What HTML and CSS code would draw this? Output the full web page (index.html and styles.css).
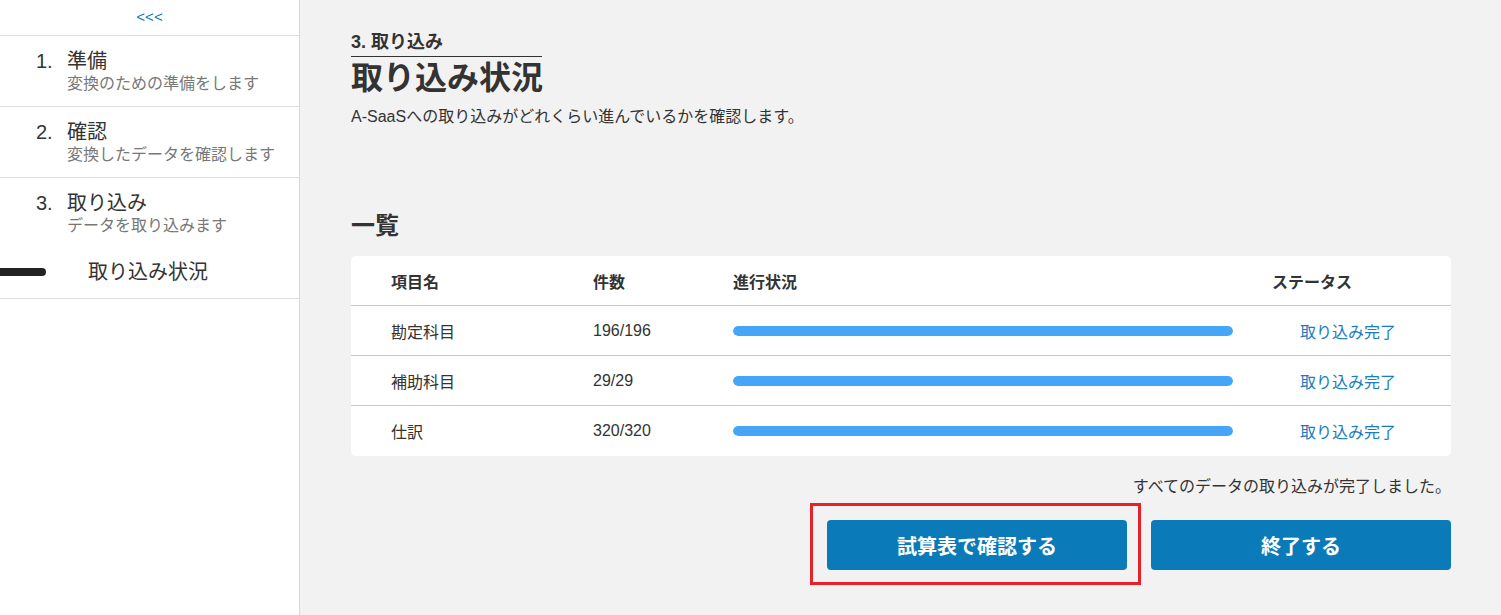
FILE: index.html
```html
<!DOCTYPE html>
<html lang="ja">
<head>
    <meta charset="UTF-8">
    <title>取り込み状況</title>
    <link rel="stylesheet" href="styles.css">
</head>
<body>

<div class="layout">
    <aside class="sidebar">
        <div class="collapse">&lt;&lt;&lt;</div>
        <div class="step">
            <div class="step-head"><span class="num">1.</span><span class="title">準備</span></div>
            <div class="sub">変換のための準備をします</div>
        </div>
        <div class="step">
            <div class="step-head"><span class="num">2.</span><span class="title">確認</span></div>
            <div class="sub">変換したデータを確認します</div>
        </div>
        <div class="step last">
            <div class="step-head"><span class="num">3.</span><span class="title">取り込み</span></div>
            <div class="sub">データを取り込みます</div>
            <div class="substep current">
                <span class="marker"></span>
                <span>取り込み状況</span>
            </div>
        </div>
    </aside>

    <main class="main">
        <div class="crumb">3. 取り込み</div>
        <h1>取り込み状況</h1>
        <p class="desc">A-SaaSへの取り込みがどれくらい進んでいるかを確認します。</p>

        <h2>一覧</h2>
        <div class="card">
            <div class="row head">
                <div>項目名</div>
                <div>件数</div>
                <div>進行状況</div>
                <div>ステータス</div>
            </div>
            <div class="row">
                <div>勘定科目</div>
                <div>196/196</div>
                <div><div class="bar"><div class="fill" style="width:100%"></div></div></div>
                <div class="status">取り込み完了</div>
            </div>
            <div class="row">
                <div>補助科目</div>
                <div>29/29</div>
                <div><div class="bar"><div class="fill" style="width:100%"></div></div></div>
                <div class="status">取り込み完了</div>
            </div>
            <div class="row">
                <div>仕訳</div>
                <div>320/320</div>
                <div><div class="bar"><div class="fill" style="width:100%"></div></div></div>
                <div class="status">取り込み完了</div>
            </div>
        </div>

        <p class="done">すべてのデータの取り込みが完了しました。</p>
        <div class="actions">
            <div class="marked"><button class="btn">試算表で確認する</button></div>
            <button class="btn">終了する</button>
        </div>
    </main>
</div>

</body>
</html>
```

FILE: styles.css
```css
:root {
    --text: #333;
    --sub: #777;
    --line: #ddd;
    --blue: #0a7bb8;
    --bar: #45a6f7;
    --bg: #f2f2f2;
}
body {
    margin: 0;
    font-family: 'Liberation Sans', 'Noto Sans CJK JP', sans-serif;
    color: var(--text);
    background: var(--bg);
}
.layout { display: flex; height: 615px; overflow: hidden; }

/* Sidebar */
.sidebar {
    width: 299px;
    flex-shrink: 0;
    background: white;
    border-right: 1px solid #d6d6d6;
}
.collapse {
    height: 35px;
    line-height: 34px;
    text-align: center;
    font-size: 15px;
    color: var(--blue);
    border-bottom: 1px solid var(--line);
}
.step { padding: 13px 0 11px 36px; border-bottom: 1px solid var(--line); }
.step-head { display: flex; font-size: 20px; line-height: 24px; }
.step-head .num { width: 31px; }
.sub { padding-left: 31px; font-size: 16px; line-height: 22px; color: var(--sub); }
.step.last { padding-bottom: 14px; }
.substep { display: flex; align-items: center; margin: 23px 0 0 -36px; font-size: 20px; line-height: 24px; }
.substep .marker {
    width: 46px; height: 8px;
    background: #222;
    border-radius: 0 4px 4px 0;
    margin-right: 42px;
}

/* Main */
.main { flex: 1; padding: 31px 50px 0 51px; }
.crumb {
    width: 191px;
    font-size: 18px;
    font-weight: bold;
    line-height: 22px;
    padding-bottom: 3px;
    border-bottom: 1px solid #333;
}
h1 { margin: 1px 0 0; font-size: 32px; line-height: 40px; }
.desc { margin: 8px 0 0; font-size: 16px; line-height: 22px; }
h2 { margin: 82px 0 0; font-size: 24px; line-height: 32px; }

.card { margin-top: 14px; background: white; border-radius: 5px; }
.row {
    display: grid;
    grid-template-columns: 202px 140px 539px 1fr;
    align-items: center;
    height: 49px;
    padding-left: 40px;
    font-size: 16px;
    border-bottom: 1px solid #c8c8c8;
}
.row:last-child { border-bottom: none; height: 50px; }
.row.head { font-weight: bold; }
.bar { width: 500px; height: 10px; border-radius: 5px; background: #e6e6e6; overflow: hidden; }
.fill { height: 100%; background: var(--bar); border-radius: 5px; }
.status { padding-left: 28px; color: #1a7dbf; }

.done { margin: 20px 0 0; text-align: right; font-size: 16px; line-height: 22px; }
.actions { display: flex; justify-content: flex-end; gap: 24px; margin-top: 22px; }
.btn {
    width: 300px; height: 50px;
    border: none;
    border-radius: 4px;
    background: var(--blue);
    color: white;
    font-family: inherit;
    font-size: 20px;
    font-weight: bold;
    cursor: pointer;
}

/* annotation frame */
.marked { position: relative; height: 50px; }
.marked::after {
    content: "";
    position: absolute;
    top: -17px; right: -14px; bottom: -15px; left: -17px;
    border: 3px solid #e8202a;
    pointer-events: none;
}
```
